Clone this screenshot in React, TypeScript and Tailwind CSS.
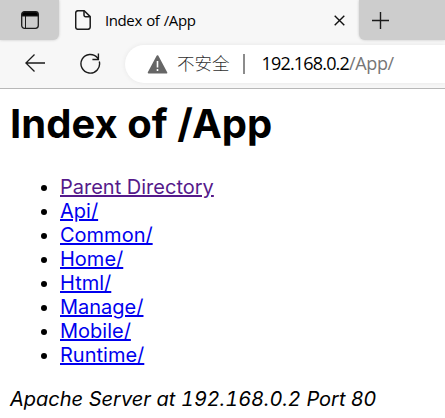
const folders = ['Api/', 'Common/', 'Home/', 'Html/', 'Manage/', 'Mobile/', 'Runtime/'];

function TabStrip() {
  return (
    <div className="flex h-10 bg-[#f7f7f7]">
      <div className="flex w-[59px] items-center rounded-br-[6px] bg-[#cdcdcd] pl-[21px] shadow-[0_0_3px_rgba(0,0,0,0.2)]">
        <svg width="18" height="18" viewBox="0 0 18 18" fill="none" stroke="#1b1b1b">
          <path d="M1 5V3.5A2.5 2.5 0 0 1 3.5 1h11A2.5 2.5 0 0 1 17 3.5V5Z" fill="#000" />
          <rect x=".7" y=".7" width="16.6" height="16.6" rx="2.8" strokeWidth="1.3" />
          <path d="M4.5 5v12" />
        </svg>
      </div>
      <div className="flex h-10 w-[300px] items-center">
        <svg className="ml-4 shrink-0" width="16" height="20" viewBox="0 0 16 20" fill="none" stroke="#1b1b1b" strokeWidth="1.5">
          <path d="M3 .7h6.2L15.2 6.6V17a2.3 2.3 0 0 1-2.3 2.3H3A2.3 2.3 0 0 1 .7 17V3A2.3 2.3 0 0 1 3 .7Z" strokeLinejoin="round" />
          <path d="M9 .9v4.2A1.6 1.6 0 0 0 10.6 6.7H15" />
        </svg>
        <span className="ml-[14px] w-[228px] whitespace-nowrap font-['Open_Sans',sans-serif] text-[15px] leading-5 tracking-[-0.4px] text-black [word-spacing:0.8px]">Index of /App</span>
        <svg className="ml-px mt-px shrink-0" width="11" height="11" viewBox="0 0 11 11" stroke="#111" strokeWidth="1.4">
          <path d="m.7.7 9.6 9.6m0-9.6L.7 10.3" />
        </svg>
      </div>
      <div className="flex flex-1 items-center rounded-bl-[6px] bg-[#cdcdcd] pl-[13px] shadow-[0_0_3px_rgba(0,0,0,0.2)]">
        <svg width="17" height="17" viewBox="0 0 17 17" stroke="#1b1b1b" strokeWidth="1.4">
          <path d="M8.5 0v17M0 8.5h17" />
        </svg>
      </div>
    </div>
  );
}

function Toolbar() {
  return (
    <div className="flex h-[49px] border-b border-[#b8b8b8] bg-[#f7f7f7]">
      <svg className="ml-[25px] mt-[14px] shrink-0" width="20" height="18" viewBox="0 0 20 18" fill="none" stroke="#1b1b1b" strokeWidth="1.3">
        <path d="M9.5.5.9 9l8.6 8.5M1 9h19" />
      </svg>
      <svg className="ml-[35px] mt-[13px] shrink-0" width="21" height="21" viewBox="0 0 21 21" fill="none" stroke="#1b1b1b" strokeWidth="1.4">
        <path d="M19.3 8.5A9.3 9.3 0 1 1 17.5 4.9L18.6 6.2M18.4.5v6h-6" />
      </svg>
      <div className="ml-6 mt-[5px] flex h-[38px] flex-1 items-center rounded-l-full bg-white pl-[22px] shadow-[0_0_5px_rgba(0,0,0,0.07)]">
        <svg className="shrink-0" width="21" height="19" viewBox="0 0 21 19">
          <path d="M10.5 1.2 19.3 17.6H1.7Z" fill="#666" stroke="#666" strokeWidth="2" strokeLinejoin="round" />
          <path d="M10.5 6v6.5M10.5 14v2" stroke="#fff" strokeWidth="1.6" />
        </svg>
        <span className="ml-[9px] w-[66px] shrink-0 -translate-y-px font-['Noto_Sans_CJK_SC',sans-serif] text-[17.5px] font-light leading-6 text-[#303030]">不安全</span>
        <span className="h-5 w-[1.5px] shrink-0 bg-[#8c8c8c]" />
        <span className="ml-[17px] -translate-y-px scale-y-105 whitespace-nowrap font-['Open_Sans',sans-serif] text-[18px] leading-6 tracking-[-0.82px] text-black">
          192.168.0.2<span className="tracking-[-0.35px] text-[#767676]">/App/</span>
        </span>
      </div>
    </div>
  );
}

export default function App() {
  return (
    <div className="h-[418px] w-[445px] overflow-hidden bg-white font-['Inter',sans-serif] text-black">
      <TabStrip />
      <Toolbar />
      <main className="px-[10px] pt-[11px]">
        <h1 className="text-[40px] font-bold leading-[48px] tracking-[0.04px]">Index of /App</h1>
        <ul className="mt-[27px] list-disc pl-[50px] text-[20px] leading-6">
          <li><a href="#parent" className="text-[#551a8b] underline">Parent Directory</a></li>
          {folders.map((name) => (
            <li key={name}><a href={'#' + name} className="text-[#0000ee] underline">{name}</a></li>
          ))}
        </ul>
        <address className="mt-5 whitespace-nowrap text-[20px] italic leading-6">Apache Server at <span className="tabular-nums">192.168.0.2</span> Port 80</address>
      </main>
    </div>
  );
}
